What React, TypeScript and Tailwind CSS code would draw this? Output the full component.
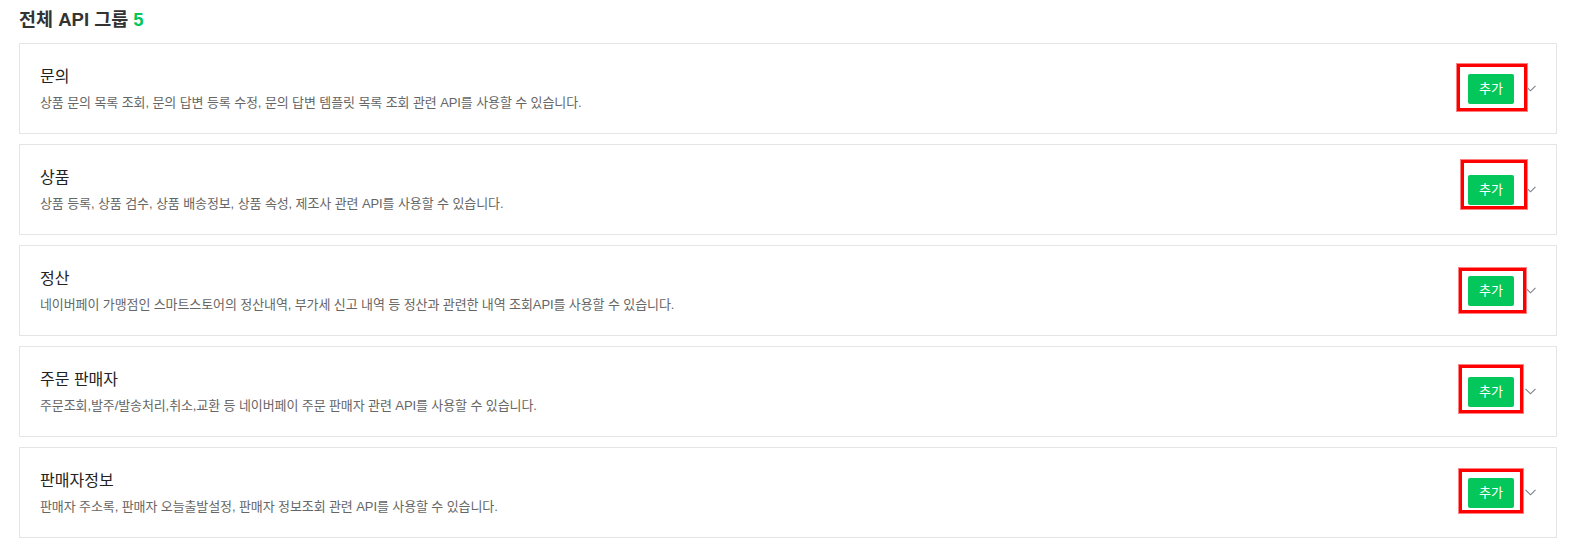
interface ApiGroup {
  id: string;
  title: string;
  description: string;
  // annotation box around the add button (offsets inside the card)
  mark: { top: number; left: number; w: number; h: number };
}

const groups: ApiGroup[] = [
  {
    id: "inquiry",
    title: "문의",
    description:
      "상품 문의 목록 조회, 문의 답변 등록 수정, 문의 답변 템플릿 목록 조회 관련 API를 사용할 수 있습니다.",
    mark: { top: 20, left: 1437, w: 70, h: 47 },
  },
  {
    id: "product",
    title: "상품",
    description: "상품 등록, 상품 검수, 상품 배송정보, 상품 속성, 제조사 관련 API를 사용할 수 있습니다.",
    mark: { top: 15, left: 1441, w: 66, h: 49 },
  },
  {
    id: "settle",
    title: "정산",
    description:
      "네이버페이 가맹점인 스마트스토어의 정산내역, 부가세 신고 내역 등 정산과 관련한 내역 조회API를 사용할 수 있습니다.",
    mark: { top: 22, left: 1439, w: 67, h: 45 },
  },
  {
    id: "order",
    title: "주문 판매자",
    description:
      "주문조회,발주/발송처리,취소,교환 등 네이버페이 주문 판매자 관련 API를 사용할 수 있습니다.",
    mark: { top: 18, left: 1439, w: 64, h: 48 },
  },
  {
    id: "seller",
    title: "판매자정보",
    description: "판매자 주소록, 판매자 오늘출발설정, 판매자 정보조회 관련 API를 사용할 수 있습니다.",
    mark: { top: 21, left: 1439, w: 64, h: 44 },
  },
];

const Chevron = () => (
  <svg width="11" height="7" viewBox="0 0 11 7" fill="none" className="text-[#7a7f88]">
    <path d="M0.5 0.8 L5.5 5.8 L10.5 0.8" stroke="currentColor" strokeWidth="1.1" />
  </svg>
);

const GroupCard = ({ group }: { group: ApiGroup }) => (
  <div className="relative flex items-center justify-between border border-[#e5e5e5] bg-white pl-5 pr-[20px] h-[91px]">
    <div className="flex flex-col">
      <h3 className="text-[16px] leading-[22px] text-[#222]">{group.title}</h3>
      <p className="mt-[6px] text-[13px] leading-[18px] tracking-[-0.1px] text-[#666]">
        {group.description}
      </p>
    </div>
    <div className="flex items-center gap-[11px]">
      <button className="w-[46px] h-[30px] rounded-[2px] bg-[#03c75a] text-[13px] text-white">추가</button>
      <Chevron />
    </div>
    {/* red annotation box */}
    <div
      className="pointer-events-none absolute border-[3px] border-[#ff0000] outline outline-1 outline-[#ff8080]"
      style={{ top: group.mark.top, left: group.mark.left, width: group.mark.w, height: group.mark.h }}
    />
  </div>
);

export default function App() {
  return (
    <div
      className="min-h-screen bg-white px-[19px] pt-[8px]"
      style={{ fontFamily: '"Liberation Sans", "Noto Sans CJK KR", sans-serif' }}
    >
      <h2 className="text-[18.5px] leading-[24px] font-bold text-[#333] mb-[11px]">
        전체 API 그룹 <span className="text-[#03c75a]">5</span>
      </h2>
      <div className="flex flex-col gap-[10px]">
        {groups.map((g) => (
          <GroupCard key={g.id} group={g} />
        ))}
      </div>
    </div>
  );
}
